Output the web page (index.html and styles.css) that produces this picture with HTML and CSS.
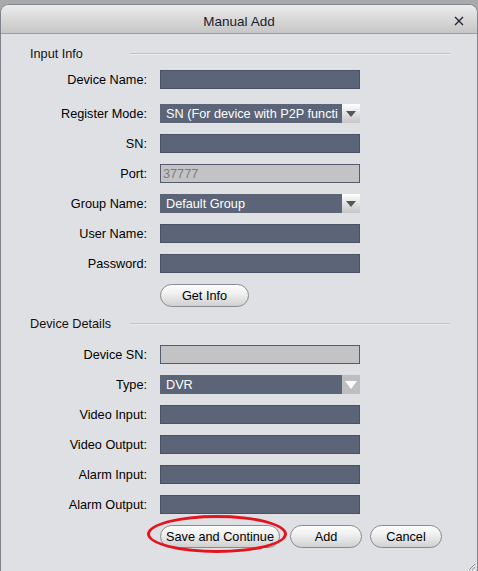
FILE: index.html
```html
<!DOCTYPE html>
<html>
<head>
<meta charset="utf-8">
<link rel="stylesheet" href="styles.css">
</head>
<body>
<div class="dialog">
  <div class="titlebar">
    <span class="title">Manual Add</span>
    <span class="close"><svg width="10" height="10" viewBox="0 0 10 10"><path d="M1 1 L9 9 M9 1 L1 9" stroke="#2a2438" stroke-width="1.4" fill="none"/></svg></span>
  </div>
  <div class="content">
    <div class="section first"><span class="section-title">Input Info</span><span class="rule"></span></div>
    <div class="row r-first"><label>Device Name:</label><div class="field"></div></div>
    <div class="row r-reg"><label>Register Mode:</label><div class="field select"><span class="val">SN (For device with P2P functi</span><span class="arrow light"><svg width="10" height="6" viewBox="0 0 10 6"><path d="M0 0 H10 L5 6 Z" fill="#55575c"/></svg></span></div></div>
    <div class="row"><label>SN:</label><div class="field"></div></div>
    <div class="row"><label>Port:</label><div class="field disabled"><span class="dval">37777</span></div></div>
    <div class="row"><label>Group Name:</label><div class="field select"><span class="val">Default Group</span><span class="arrow light"><svg width="10" height="6" viewBox="0 0 10 6"><path d="M0 0 H10 L5 6 Z" fill="#55575c"/></svg></span></div></div>
    <div class="row"><label>User Name:</label><div class="field"></div></div>
    <div class="row"><label>Password:</label><div class="field"></div></div>
    <div class="row r-btn"><label></label><button class="btn getinfo">Get Info</button></div>
    <div class="section second"><span class="section-title">Device Details</span><span class="rule"></span></div>
    <div class="row r-dsn"><label>Device SN:</label><div class="field disabled"></div></div>
    <div class="row"><label>Type:</label><div class="field select"><span class="val">DVR</span><span class="arrow gray"><svg width="12" height="8" viewBox="0 0 12 8"><path d="M0 0 H12 L6 8 Z" fill="#ffffff"/></svg></span></div></div>
    <div class="row"><label>Video Input:</label><div class="field"></div></div>
    <div class="row"><label>Video Output:</label><div class="field"></div></div>
    <div class="row"><label>Alarm Input:</label><div class="field"></div></div>
    <div class="row"><label>Alarm Output:</label><div class="field"></div></div>
    <div class="row r-actions"><label></label>
      <div class="actions">
        <div class="mark-wrap"><button class="btn save">Save and Continue</button><span class="ellipse"></span></div>
        <button class="btn add">Add</button>
        <button class="btn cancel">Cancel</button>
      </div>
    </div>
  </div>
  <span class="grip"><svg width="8" height="8" viewBox="0 0 8 8"><path d="M7 1 L1 7 M7 4 L4 7" stroke="#8d9098" stroke-width="1" fill="none"/></svg></span>
</div>
</body>
</html>
```
FILE: styles.css
```css
html, body {
  margin: 0;
  padding: 0;
}
body {
  background: #a8a9ab;
  width: 478px;
  height: 571px;
  overflow: hidden;
  font-family: "Liberation Sans", Arial, sans-serif;
  font-size: 12.7px;
  color: #000;
}
.dialog {
  position: relative;
  margin-top: 4px;
  height: 575px;
  background: #dfe0e4;
  border: 1px solid #7f838c;
  border-bottom: none;
  border-radius: 9px 9px 0 0;
  box-sizing: border-box;
  overflow: hidden;
}
.titlebar {
  position: relative;
  height: 28px;
  border-bottom: 1px solid #9a9ca0;
  background: linear-gradient(#ececec 0%, #dcdcdc 40%, #c6c6c6 100%);
  display: flex;
  align-items: center;
  justify-content: center;
}
.title {
  font-size: 13.5px;
  color: #1c1c2c;
  padding-top: 4px;
}
.close {
  position: absolute;
  right: 13px;
  top: 11px;
  width: 10px;
  height: 10px;
  display: flex;
}
.content {
  display: flex;
  flex-direction: column;
}
.section {
  display: flex;
  align-items: center;
  height: 16px;
  padding-left: 29px;
}
.section.first { margin-top: 12px; }
.section.second { margin-top: 9px; }
.section-title {
  width: 100px;
  color: #111;
}
.rule {
  flex: none;
  width: 320px;
  height: 1px;
  background: #c2c3c8;
  border-bottom: 1px solid #ececef;
}
.row {
  display: flex;
  align-items: center;
  margin-top: 11px;
  height: 19px;
}
.row.r-first { margin-top: 8px; }
.row.r-reg { margin-top: 15px; }
.row.r-btn { height: 23px; }
.row.r-dsn { margin-top: 13px; }
.row.r-actions { height: 23px; }
.row label {
  width: 146px;
  text-align: right;
  margin-right: 13px;
  white-space: nowrap;
  padding-top: 1px;
}
.field {
  width: 200px;
  height: 19px;
  box-sizing: border-box;
  background: #5c6478;
  border: 1px solid #4a5165;
  display: flex;
  align-items: center;
}
.field.disabled {
  background: #c3c3c5;
  border-color: #555b6c;
}
.dval {
  color: #7b7b7d;
  padding-left: 2px;
}
.field.select {
  border: none;
  background: #5c6478;
  justify-content: space-between;
  overflow: hidden;
}
.val {
  color: #fff;
  padding-left: 6px;
  white-space: nowrap;
  overflow: hidden;
  flex: 1;
}
.arrow {
  flex: none;
  width: 18px;
  height: 19px;
  display: flex;
  align-items: center;
  justify-content: center;
}
.arrow.light {
  background: linear-gradient(#ffffff, #dcdcdc 60%, #c6c6c6);
}
.arrow.gray {
  background: #bebebf;
  height: 21px;
}
.btn {
  font-family: "Liberation Sans", Arial, sans-serif;
  font-size: 12.7px;
  color: #000;
  height: 23px;
  border: 1px solid #8a8b8e;
  border-radius: 12px;
  background: linear-gradient(#fdfdfd 0%, #f0f0f0 40%, #d0d0d0 100%);
  padding: 0;
  margin: 0;
  box-sizing: border-box;
}
.getinfo { width: 89px; }
.actions {
  display: flex;
  align-items: center;
}
.mark-wrap {
  position: relative;
  margin-right: 10px;
  display: flex;
}
.save { width: 120px; }
.add { width: 72px; margin-right: 8px; }
.cancel { width: 72px; }
.ellipse {
  position: absolute;
  left: -13px;
  top: -10px;
  width: 140px;
  height: 38px;
  box-sizing: border-box;
  border: 3.5px solid #e3141e;
  border-radius: 50%;
  pointer-events: none;
}
.grip {
  position: absolute;
  right: 1px;
  top: 558px;
  display: flex;
}
```
